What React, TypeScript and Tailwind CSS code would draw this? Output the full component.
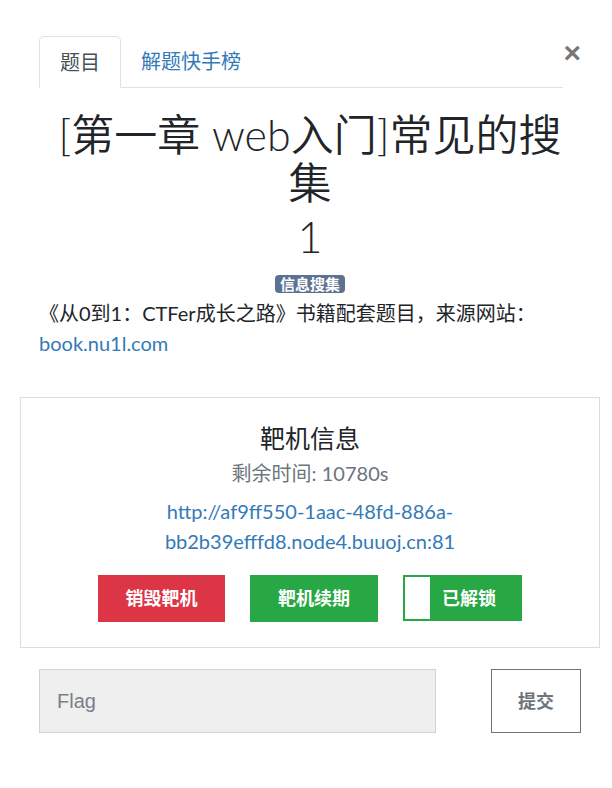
import { useState } from 'react';

const BODY_FONT = "font-['Lato','Noto_Sans_CJK_SC',sans-serif]";

export default function App() {
  const [flag, setFlag] = useState('');

  return (
    <div className={`w-[612px] min-h-[788px] bg-white text-[#212529] ${BODY_FONT}`}>
      <div className="w-[542px] ml-[39px] pt-[36px]">
        {/* Tabs + close */}
        <div className="flex items-start">
          <div className="w-[525px] flex border-b border-[#dee2e6]">
            <div className="-mb-px px-[20px] py-[10px] border border-[#dee2e6] border-b-white rounded-t-[5px] bg-white text-[20px] leading-[30px] text-[#495057]">
              题目
            </div>
            <div className="px-[20px] py-[10px] text-[20px] leading-[30px] text-[#337ab7]">解题快手榜</div>
          </div>
          <button className="ml-auto mt-[2px] text-[30px] leading-[30px] font-bold text-[#777] font-['Liberation_Sans',sans-serif]">
            ×
          </button>
        </div>

        {/* Title */}
        <h1 className="mt-[23px] text-center text-[43px] leading-[48px] font-[350] text-[#212529]">
          <span className="font-light">[</span>第一章<span className="font-light"> web</span>入门
          <span className="font-light">]</span>常见的搜
          <br />集
        </h1>
        <h2 className="mt-[6px] text-center text-[43px] leading-[48px] font-light">1</h2>

        <div className="mt-[14px] flex justify-center">
          <span className="h-[18px] px-[5px] rounded-[4px] bg-[#5d7291] text-white text-[15px] leading-[18px] font-bold">
            信息搜集
          </span>
        </div>

        <p className="mt-[5px] text-[20px] leading-[30px]">
          《从0到1：CTFer成长之路》书籍配套题目，来源网站：
          <br />
          <a className="text-[#337ab7]">book.nu1l.com</a>
        </p>

        {/* Target machine card */}
        <div className="mt-[39px] -mx-[19px] border border-[#dddddd] pt-[25px] pb-[25px] flex flex-col items-center">
          <h4 className="text-[25px] leading-[30px] text-[#212529]">靶机信息</h4>
          <div className="mt-[5px] text-[20px] leading-[30px] text-[#6c757d]">剩余时间: 10780s</div>
          <a className="mt-[8px] text-center text-[20px] leading-[30px] text-[#337ab7]">
            http://af9ff550-1aac-48fd-886a-
            <br />
            bb2b39efffd8.node4.buuoj.cn:81
          </a>
          <div className="mt-[19px] flex gap-[25px]">
            <button className="w-[127px] h-[47px] bg-[#dc3545] text-white text-[18px] font-bold">销毁靶机</button>
            <button className="w-[128px] h-[47px] bg-[#28a745] text-white text-[18px] font-bold">靶机续期</button>
            <button className="w-[119px] h-[46px] flex border-2 border-[#28a745] bg-[#28a745] text-white text-[18px] font-bold">
              <span className="w-[25px] h-full bg-white" />
              <span className="flex-1 text-center leading-[42px] pr-[12px]">已解锁</span>
            </button>
          </div>
        </div>

        {/* Flag submit */}
        <div className="mt-[21px] flex justify-between">
          <input
            value={flag}
            onChange={(e) => setFlag(e.target.value)}
            placeholder="Flag"
            className="w-[397px] h-[64px] px-[17px] bg-[#efefef] border border-[#ced4da] text-[20px] font-['Liberation_Sans',sans-serif] placeholder:text-[#7a7f85] outline-none"
          />
          <button className="w-[90px] h-[64px] border border-[#6c757d] text-[#6c757d] text-[18px] font-bold">提交</button>
        </div>
      </div>
    </div>
  );
}
